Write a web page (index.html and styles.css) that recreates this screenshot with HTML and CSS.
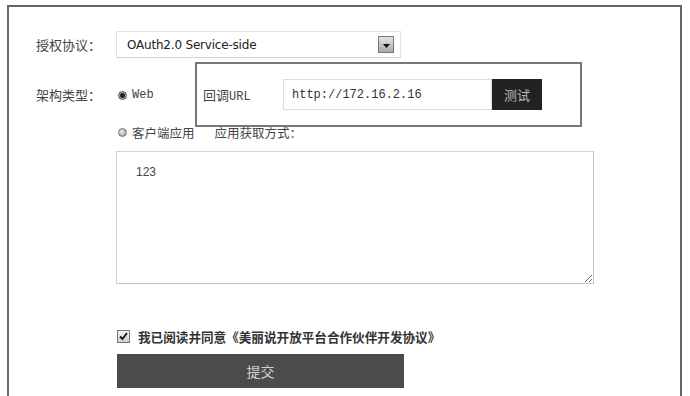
FILE: index.html
```html
<!DOCTYPE html>
<html lang="zh-CN">
<head>
    <meta charset="UTF-8">
    <meta name="viewport" content="width=device-width, initial-scale=1.0">
    <link rel="stylesheet" href="styles.css">
    <title>创建应用</title>
</head>
<body>
    <div class="frame">
        <form class="app-form">
            <div class="form-row row-auth">
                <span class="label">授权协议：</span>
                <div class="select">
                    <span class="select-value">OAuth2.0 Service-side</span>
                    <span class="select-arrow">
                        <svg width="7" height="4" viewBox="0 0 7 4"><path d="M0 0H7L3.5 4Z" fill="#111"/></svg>
                    </span>
                </div>
            </div>

            <div class="form-row row-type">
                <span class="label">架构类型：</span>
                <div class="options">
                    <div class="option"><span class="radio checked"></span><span class="mono">Web</span></div>
                    <div class="option"><span class="radio"></span>客户端应用<span class="fetch">应用获取方式：</span></div>
                </div>
            </div>

            <div class="form-row row-desc">
                <span class="label"></span>
                <textarea class="desc">123</textarea>
            </div>

            <div class="agree">
                <span class="checkbox">
                    <svg width="9" height="9" viewBox="0 0 9 9"><path d="M1 4.5L3.5 7L8 1" fill="none" stroke="#111" stroke-width="1.8"/></svg>
                </span>
                我已阅读并同意《美丽说开放平台合作伙伴开发协议》
            </div>

            <button type="button" class="submit">提交</button>

            <div class="callback">
                <span class="callback-label">回调<span class="mono">URL</span></span>
                <input class="callback-input" type="text" value="http://172.16.2.16">
                <button type="button" class="callback-test">测试</button>
            </div>
        </form>
    </div>
</body>
</html>
```

FILE: styles.css
```css
html, body {
    margin: 0;
    overflow: hidden;
    background-color: #ffffff;
}

body {
    font-family: "Noto Sans CJK SC", "Liberation Sans", sans-serif;
    color: #333;
    font-size: 13px;
}

.frame {
    margin: 5px 0 0 7px;
    width: 675px;
    height: 391px;
    box-sizing: border-box;
    border: 2px solid #666;
    border-bottom: none;
    padding: 24px 0 0 27px;
}

.app-form {
    position: relative;
}

.mono {
    font-family: "Liberation Mono", "DejaVu Sans Mono", monospace;
    font-size: 12px;
}

.form-row {
    display: grid;
    grid-template-columns: 80px auto;
    align-items: center;
}

.label {
    font-size: 13px;
    color: #444;
}

.select {
    width: 285px;
    height: 27px;
    box-sizing: border-box;
    border: 1px solid #e2e2e2;
    border-bottom-color: #d0d0d0;
    display: flex;
    align-items: center;
    justify-content: space-between;
    padding: 0 6px 0 10px;
}

.select-value {
    font-family: "DejaVu Sans", sans-serif;
    font-size: 12px;
    color: #222;
    letter-spacing: -0.2px;
}

.select-arrow {
    width: 16px;
    height: 17px;
    box-sizing: border-box;
    border: 1px solid #777;
    background: linear-gradient(#e4e4e4, #a8a8a8);
    display: flex;
    align-items: center;
    justify-content: center;
    padding-top: 2px;
}

.row-type {
    margin-top: 21px;
    align-items: start;
}

.row-type .label {
    line-height: 32px;
}

.options {
    display: flex;
    flex-direction: column;
    gap: 5px;
}

.option {
    height: 32px;
    display: flex;
    align-items: center;
    font-size: 12.5px;
    color: #444;
}

.radio {
    width: 9px;
    height: 9px;
    border-radius: 50%;
    margin: 0 5px 0 2px;
    background: radial-gradient(circle at 40% 40%, #eee, #888);
    border: 1px solid #777;
    box-sizing: border-box;
}

.radio.checked {
    background: radial-gradient(circle, #222 0 2px, #aaa 3px);
    border-color: #555;
}

.fetch {
    margin-left: 20px;
}

.row-desc {
    margin-top: 3px;
}

.desc {
    width: 478px;
    height: 133px;
    box-sizing: border-box;
    border: 1px solid #d2d2d2;
    border-right-color: #c4c4c4;
    border-bottom-color: #c4c4c4;
    padding: 13px 19px;
    font-family: "Liberation Sans", sans-serif;
    font-size: 12px;
    color: #444;
    margin: 0;
}

.agree {
    margin: 42px 0 0 81px;
    height: 20px;
    display: flex;
    align-items: center;
    font-size: 12.6px;
    font-weight: bold;
    color: #333;
}

.checkbox {
    width: 13px;
    height: 13px;
    box-sizing: border-box;
    border: 1px solid #777;
    background: linear-gradient(#f2f2f2, #cfcfcf);
    display: flex;
    align-items: center;
    justify-content: center;
    margin-right: 8px;
}

.submit {
    display: block;
    margin: 8px 0 0 81px;
    width: 287px;
    height: 34px;
    border: none;
    background-color: #4b4b4b;
    color: #cfcfcf;
    font-family: "Noto Sans CJK SC", sans-serif;
    font-size: 14px;
    padding: 0;
}

.callback {
    position: absolute;
    left: 159px;
    top: 31px;
    width: 387px;
    height: 65px;
    box-sizing: border-box;
    border: 2px solid #777;
    background-color: #fff;
    display: flex;
    align-items: center;
    padding-left: 6px;
}

.callback-label {
    width: 80px;
    font-size: 13px;
    color: #444;
}

.callback-input {
    width: 209px;
    height: 31px;
    box-sizing: border-box;
    border: 1px solid #dcdcdc;
    padding: 0 8px;
    font-family: "Liberation Mono", "DejaVu Sans Mono", monospace;
    font-size: 12px;
    color: #333;
    margin: 0;
}

.callback-test {
    width: 50px;
    height: 31px;
    border: none;
    margin: 0;
    padding: 0;
    background-color: #222;
    color: #bbb;
    font-family: "Noto Sans CJK SC", sans-serif;
    font-size: 13px;
}
```
